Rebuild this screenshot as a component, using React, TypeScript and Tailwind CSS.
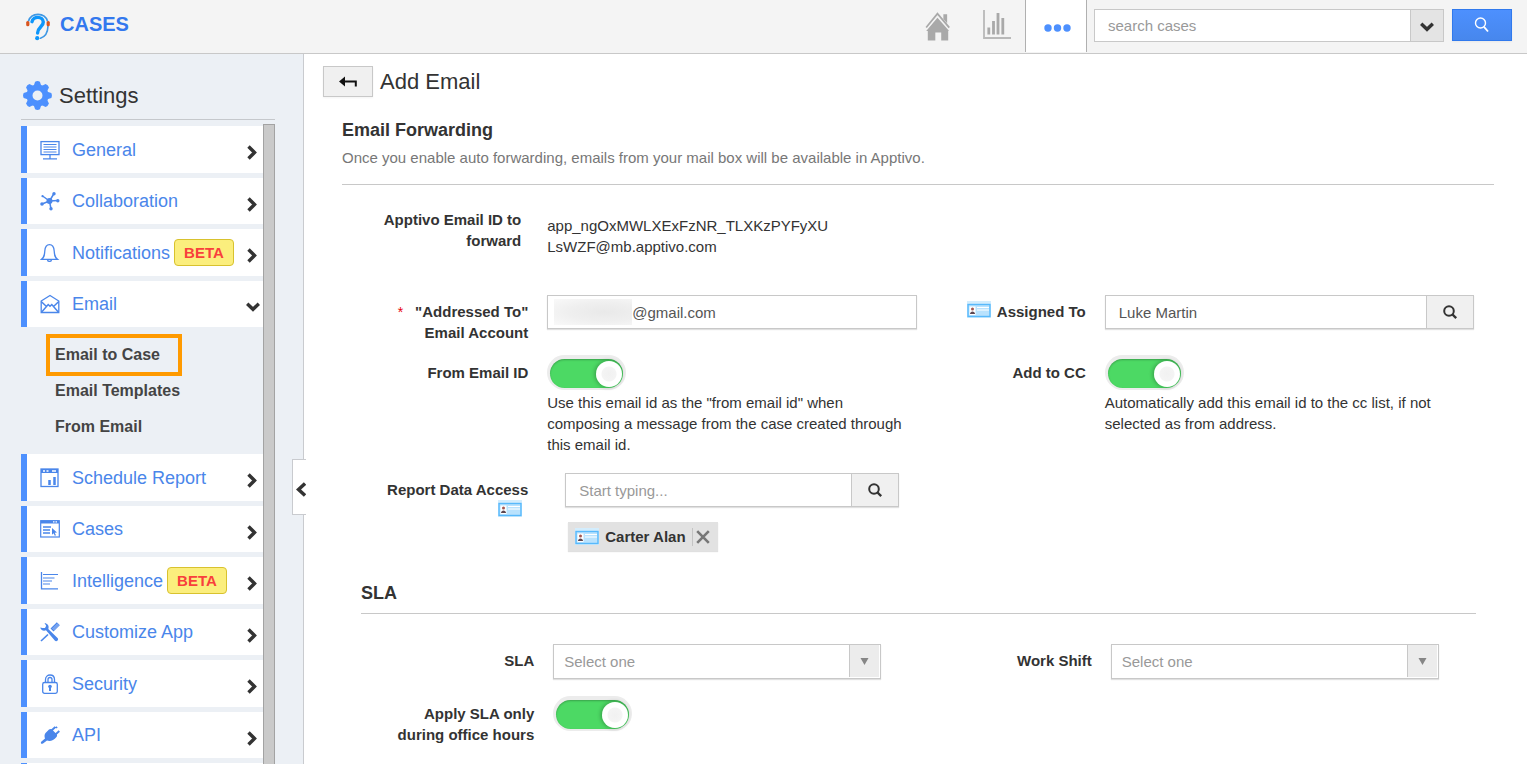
import { useState, type ReactNode } from "react";

/* ---------- icons ---------- */

const CasesLogo = () => (
  <svg width="24" height="29" viewBox="0 0 24 29" fill="none" aria-hidden="true">
    <path d="M2.300 9.500A10.200 10.200 0 0 1 21.700 9.500" stroke="#3d97e4" strokeWidth="1.700" />
    <path d="M22 14C21.800 20.500 19 24.800 14.500 26.200" stroke="#3d97e4" strokeWidth="1.600" strokeLinecap="round" />
    <path d="M6 9.700C7 4 17 3.800 17.300 10C17.500 14.500 11.700 15 11.600 21" stroke="#0d96fb" strokeWidth="3.400" strokeLinecap="round" />
    <circle cx="11.200" cy="26.200" r="2.100" fill="#0d96fb" />
    <rect x="0.200" y="9" width="3.200" height="5.200" rx="1.500" fill="#d9541e" />
    <rect x="20.600" y="9" width="3.200" height="5.200" rx="1.500" fill="#d9541e" />
  </svg>
);

const HomeIcon = () => (
  <svg width="26" height="29" viewBox="1 0.500 24 27" aria-hidden="true">
    <path d="M2 15 12.500 2 23.500 15" fill="none" stroke="#a9a9a9" strokeWidth="1.600" />
    <path d="M18 2.500h3.500v8.500L18 7z" fill="#a9a9a9" />
    <path d="M12.500 5.800 23 17.800V18.200h-0.500V27H16v-7.500h-5.500V27H3.500v-8.800H2z" fill="#a9a9a9" />
  </svg>
);

const ChartIcon = () => (
  <svg width="28" height="30" viewBox="0 0 28 30" aria-hidden="true">
    <path d="M1 0v28h27" fill="none" stroke="#b9b9b9" strokeWidth="1.800" />
    <path d="M5.800 17.500v7M10.500 11v13.500M15 3v21.500M19.800 8v16.500" stroke="#a9a9a9" strokeWidth="2.800" />
  </svg>
);

const DotsIcon = () => (
  <svg width="28" height="8" viewBox="0 0 28 8" fill="#4d90fe" aria-hidden="true">
    <circle cx="4" cy="4" r="3.700" />
    <circle cx="13.500" cy="4" r="3.700" />
    <circle cx="23" cy="4" r="3.700" />
  </svg>
);

const ThinSearchIcon = () => (
  <svg width="16" height="16" viewBox="0 0 16 16" fill="none" stroke="#fff" strokeWidth="1.400" aria-hidden="true">
    <circle cx="6.500" cy="6" r="5" />
    <path d="m10 9.800 4 4.700" strokeWidth="1.800" />
  </svg>
);

const BoldSearchIcon = () => (
  <svg width="16" height="16" viewBox="0 0 16 16" fill="none" stroke="#333" aria-hidden="true">
    <circle cx="7" cy="7" r="4.800" strokeWidth="2" />
    <path d="m10.500 10.500 3.700 3.700" strokeWidth="2.400" />
  </svg>
);

const ChevronRight = () => (
  <svg width="10" height="15" viewBox="0 0 10 15" fill="none" stroke="#333" strokeWidth="3.400" aria-hidden="true">
    <path d="m1.500 1.500 6 6-6 6" />
  </svg>
);

const ChevronDown = () => (
  <svg width="14" height="10" viewBox="0 0 14 10" fill="none" stroke="#333" strokeWidth="3.400" aria-hidden="true">
    <path d="m1.200 1.800 5.800 5.500 5.800-5.500" />
  </svg>
);

const ChevronLeft = () => (
  <svg width="10" height="15" viewBox="0 0 10 15" fill="none" stroke="#333" strokeWidth="3.400" aria-hidden="true">
    <path d="m9 1.500-6.500 6 6.500 6" />
  </svg>
);

const GearIcon = () => (
  <svg width="29" height="29" viewBox="-14.500 -14.500 29 29" aria-hidden="true">
    <g fill="#4d90fe">
      {[0, 45, 90, 135, 180, 225, 270, 315].map((angle) => (
        <path key={angle} d="M-4-9-2.400-13.800Q0-15 2.400-13.800L4-9z" transform={`rotate(${angle})`} />
      ))}
    </g>
    <circle r="8" fill="none" stroke="#4d90fe" strokeWidth="6" />
  </svg>
);

const BackArrow = () => (
  <svg width="18" height="12" viewBox="0 0 18 12" aria-hidden="true">
    <path d="M0 5.500 6 0.500v10z" fill="#111" />
    <path d="M5 5.500h11.800v5" fill="none" stroke="#111" strokeWidth="2" />
  </svg>
);

const ContactCard = () => (
  <svg width="24" height="17" viewBox="0 0 24 17" className="shrink-0" aria-hidden="true">
    <rect width="24" height="17" fill="#d3edfd" />
    <rect x="1" y="3.500" width="22" height="12" fill="#b9e2fd" stroke="#58b9fb" strokeWidth="1.400" />
    <rect x="2.500" y="5.500" width="6" height="8.500" fill="#fff" />
    <circle cx="5.500" cy="8" r="1.500" fill="#a5584f" />
    <path d="M3 13c0-3.500 5-3.500 5 0z" fill="#5c4650" />
    <path d="M10 6.500h12M10 9h12" stroke="#fff" strokeWidth="1.200" />
  </svg>
);

const MenuSvg = ({ children }: { children: ReactNode }) => (
  <svg width="20" height="20" viewBox="0 0 20 20" fill="none" stroke="#4a86ea" strokeWidth="1.300" className="shrink-0" aria-hidden="true">
    {children}
  </svg>
);

const GeneralIcon = () => (
  <MenuSvg>
    <rect x="1" y="1.600" width="18" height="13" />
    <path d="M3.500 4.500h13M3.500 7h13M3.500 9.500h13M3.500 12h13" strokeWidth="1.100" />
    <path d="M10 15v3.500M3 18.800h14" strokeWidth="1.300" />
  </MenuSvg>
);

const CollaborationIcon = () => (
  <MenuSvg>
    <path d="M9.500 10 14 2.500M9.500 10 18 9.500M9.500 10l1.500 8M9.500 10 2 13M9.500 10 2.500 5" strokeWidth="1.500" />
    <circle cx="9.500" cy="10" r="3" fill="#4a86ea" stroke="none" />
    <g fill="#4a86ea" stroke="none">
      <circle cx="14" cy="2.800" r="1.700" />
      <circle cx="17.800" cy="9.700" r="1.700" />
      <circle cx="11" cy="17.700" r="1.700" />
      <circle cx="2" cy="13" r="1.800" />
      <circle cx="2.500" cy="5.200" r="1.100" />
    </g>
  </MenuSvg>
);

const BellIcon = () => (
  <MenuSvg>
    <path d="M1.500 16.300C4.500 14 4.500 12 4.800 8c.3-4.500 2.200-6.300 4.700-6.300s4.400 1.800 4.700 6.300c.3 4 .3 6 3.300 8.300z" />
    <path d="M7.500 16.800c.4 2.200 3.600 2.200 4 0" />
  </MenuSvg>
);

const EnvelopeIcon = () => (
  <MenuSvg>
    <path d="M1.200 7 10 1.500 18.800 7v11.500H1.200z" />
    <path d="m1.200 7.500 5.800 5.500M18.800 7.500 13 13M1.500 18.300l6.700-7.800 1.800 1.800 1.800-1.800 6.700 7.800" strokeWidth="1.500" />
  </MenuSvg>
);

const ScheduleIcon = () => (
  <MenuSvg>
    <rect x="1" y="1" width="17" height="17.500" />
    <path d="M1 3h17" strokeWidth="4" />
    <path d="M3 3h2M6.500 3h2M12 3h4" stroke="#fff" strokeWidth="1.300" />
    <path d="M9.500 12v5M14.500 9v8" strokeWidth="2.500" />
  </MenuSvg>
);

const CasesIcon = () => (
  <MenuSvg>
    <rect x="0.700" y="1.700" width="18.600" height="16.300" strokeWidth="1.200" />
    <path d="M1 3h18" strokeWidth="3" />
    <path d="M13 2.800h1.500M15.500 2.800H17" stroke="#fff" />
    <path d="M3 8h8M3 11h7M3 14h7" strokeWidth="1.500" />
    <path d="m12 9 5 4.500-2.300.2 1.300 2.500-1.200.6-1.200-2.600-1.600 1.500z" fill="#4a86ea" stroke="none" />
  </MenuSvg>
);

const IntelligenceIcon = () => (
  <MenuSvg>
    <path d="M1.500 1v16.800H18" strokeWidth="1.300" />
    <path d="M3 3.500h15M3 7h11.500M3 10h9M3 13h7" strokeWidth="1.200" />
  </MenuSvg>
);

const ToolsIcon = () => (
  <MenuSvg>
    <path d="M0.300 5.500C.5 8 3.500 9.500 6 8.300l9 10.500c1.500 1.200 4-.8 2.800-2.600L8.300 7C9.500 4 7.500 1.300 4.500 1L6.200 3.800 5 6 2.500 6z" fill="#4a86ea" stroke="none" />
    <path d="M1 19 8 12.500" strokeWidth="1.700" />
    <path d="m12 8 6.300-6.300" strokeWidth="4.200" />
    <path d="m12.500 7 5.500-5.500M13.500 8 19 2.500" stroke="#c5d9fb" strokeWidth="0.700" />
  </MenuSvg>
);

const LockIcon = () => (
  <MenuSvg>
    <rect x="2.700" y="8.500" width="14.600" height="10.800" rx="1.800" />
    <path d="M5.500 8.500V5.500c0-6 9-6 9 0v3M8 8.500v-3c0-2.700 4-2.700 4 0v3" />
    <circle cx="10" cy="12.500" r="1.800" fill="#4a86ea" stroke="none" />
    <path d="M10 13v4" strokeWidth="2" />
  </MenuSvg>
);

const PlugIcon = () => (
  <MenuSvg>
    <path d="M5.500 8 9 4.500c1-.8 2-.8 3 0L16.500 9c.8 1 .8 2 0 3-3 4-7 4.500-9.500 3.500L3 18.500c-1.500 1-2.800-.3-1.800-1.800L5 13.500C4.300 11.500 4.300 9.500 5.500 8z" fill="#4a86ea" stroke="none" />
    <path d="m11.500 5.500 3.800-3.500M15.500 9.500 19.300 6M17 1.800l-1 1" strokeWidth="1.900" />
  </MenuSvg>
);

/* ---------- sidebar ---------- */

type MenuEntry = { label: string; icon: ReactNode; beta?: boolean; children?: string[] };

const menu: MenuEntry[] = [
  { label: "General", icon: <GeneralIcon /> },
  { label: "Collaboration", icon: <CollaborationIcon /> },
  { label: "Notifications", icon: <BellIcon />, beta: true },
  { label: "Email", icon: <EnvelopeIcon />, children: ["Email to Case", "Email Templates", "From Email"] },
  { label: "Schedule Report", icon: <ScheduleIcon /> },
  { label: "Cases", icon: <CasesIcon /> },
  { label: "Intelligence", icon: <IntelligenceIcon />, beta: true },
  { label: "Customize App", icon: <ToolsIcon /> },
  { label: "Security", icon: <LockIcon /> },
  { label: "API", icon: <PlugIcon /> },
];

function Sidebar() {
  return (
    <aside className="relative flex w-[304px] shrink-0 flex-col border-r border-[#c9cbcf] bg-[#ecf0f5] pl-[21px] pr-7">
      <h2 className="flex h-[66px] shrink-0 items-center gap-[7px] border-b border-[#c5c8cc] pt-[18px] pl-0.5 text-[22px] text-[#333]">
        <GearIcon />
        Settings
      </h2>
      <div className="flex min-h-0 flex-1 pt-1">
        <nav className="min-w-0 flex-1 overflow-hidden pt-0.5" aria-label="Settings">
          <ul className="flex flex-col gap-[5px]">
            {menu.map((entry, i) => (
              <li key={entry.label}>
                <a
                  href="#"
                  className={`flex items-center border-l-6 border-[#4d90fe] bg-white pr-1.5 pl-[13px] text-lg text-[#4a86ea] ${
                    i % 2 === 0 ? "h-[47px]" : "h-[46px]"
                  }`}
                >
                  {entry.icon}
                  <span className="ml-3 flex items-center gap-1">
                    {entry.label}
                    {entry.beta && (
                      <span className="flex h-[27px] items-center rounded-sm border border-[#d8c22e] bg-[#fbee7d] px-[9px] text-[15px] font-bold text-[#f8403c]">
                        BETA
                      </span>
                    )}
                  </span>
                  <span className={`ml-auto pt-1.5 ${entry.children ? "-mr-[3px]" : ""}`}>
                    {entry.children ? <ChevronDown /> : <ChevronRight />}
                  </span>
                </a>
                {entry.children && (
                  <ul className="pt-2.5 pb-1 pl-7 text-base font-bold text-[#444]">
                    {entry.children.map((child, n) => (
                      <li key={child}>
                        <a
                          href="#"
                          className={`flex h-9 w-[130px] items-center pl-1.5 whitespace-nowrap ${
                            n === 0 ? "outline-4 -outline-offset-1 outline-[#ff9a00]" : ""
                          }`}
                        >
                          {child}
                        </a>
                      </li>
                    ))}
                  </ul>
                )}
              </li>
            ))}
            <li className="h-[47px] border-l-6 border-[#4d90fe] bg-white" />
          </ul>
        </nav>
        <div className="w-3 shrink-0 border border-b-0 border-[#a3a3a3] bg-[#cacaca]" />
      </div>
      <button
        type="button"
        aria-label="Collapse settings"
        className="absolute top-[405px] -right-[3px] flex h-14 w-[14px] items-center justify-end border border-r-0 border-[#c9cbcf] bg-white pt-1"
      >
        <ChevronLeft />
      </button>
    </aside>
  );
}

/* ---------- form pieces ---------- */

function Toggle({ id }: { id: string }) {
  const [on, setOn] = useState(true);
  return (
    <input
      id={id}
      type="checkbox"
      role="switch"
      checked={on}
      onChange={() => setOn(!on)}
      className="mt-[3px] ml-[3px] flex h-[29px] w-[73px] appearance-none items-center rounded-full bg-gray-300 px-px shadow-[0px_-1px_0px_3px_#ececec,inset_0_1px_2px_rgba(0,0,0,0.25)] before:block before:size-[26px] before:rounded-full before:bg-[radial-gradient(circle,#f1f1f1_0,#f4f4f4_7px,#ffffff_8px)] before:shadow-[-1px_0_4px_rgba(0,0,0,0.3)] before:content-[''] checked:justify-end checked:bg-[#4cd964]"
    />
  );
}

function Field({ id, label, children }: { id: string; label: ReactNode; children: ReactNode }) {
  return (
    <div className="grid grid-cols-[30%_minmax(0,1fr)] gap-x-[19px]">
      <label htmlFor={id} className="justify-self-end pt-1.5 text-right font-bold text-[#333]">
        {label}
      </label>
      <div className="pr-0.5">{children}</div>
    </div>
  );
}

function Lookup({ id, value, placeholder }: { id: string; value?: string; placeholder?: string }) {
  return (
    <div className="flex h-[34px] border border-[#c8c8c8] shadow-[0_1px_1px_rgba(0,0,0,0.12)]">
      <input
        id={id}
        type="text"
        defaultValue={value}
        placeholder={placeholder}
        className="min-w-0 flex-1 bg-white px-[13px] text-[#555] outline-none placeholder:text-[#999]"
      />
      <button
        type="button"
        aria-label="Search people"
        className="flex w-[47px] items-center justify-center border-l border-[#c8c8c8] bg-[#f0f0f0]"
      >
        <BoldSearchIcon />
      </button>
    </div>
  );
}

function Select({ id }: { id: string }) {
  return (
    <div className="relative h-[35px] w-[328px] max-w-full border border-[#c8c8c8] shadow-[0_1px_1px_rgba(0,0,0,0.12)]">
      <select id={id} className="size-full appearance-none bg-white pr-9 pl-2.5 text-[#999] outline-none">
        <option>Select one</option>
      </select>
      <span className="pointer-events-none absolute top-0 right-px bottom-px flex w-[30px] items-center justify-center border-l border-[#c8c8c8] bg-[#ececec]">
        <svg width="9" height="7" viewBox="0 0 9 7" fill="#868686" aria-hidden="true">
          <path d="M0.500 0h8l-4 7z" />
        </svg>
      </span>
    </div>
  );
}

/* ---------- page ---------- */

export default function App() {
  return (
    <div className="flex h-screen flex-col overflow-hidden bg-white font-['Liberation_Sans',Arial,sans-serif] text-[15px] leading-[21px] text-[#333]">
      <header className="flex h-[54px] shrink-0 items-start border-b border-[#c8c8c8] bg-[#f4f4f4] pr-[15px] pl-[26px]">
        <a href="#" className="flex items-start gap-2.5 pt-3 text-xl leading-6 font-bold text-[#3378ee]">
          <CasesLogo />
          CASES
        </a>
        <div className="ml-auto flex h-full items-start">
          <a href="#" aria-label="Home" className="pt-3 pr-8">
            <HomeIcon />
          </a>
          <a href="#" aria-label="Reports" className="pt-2.5 pr-3.5">
            <ChartIcon />
          </a>
          <button
            type="button"
            aria-label="More"
            className="flex h-[52px] w-[62px] items-center justify-center border-x border-[#b0b0b0] bg-white pt-1 pl-1"
          >
            <DotsIcon />
          </button>
        </div>
        <form className="flex pt-[9px] pl-[7px]" onSubmit={(e) => e.preventDefault()}>
          <input
            type="text"
            aria-label="Search cases"
            placeholder="search cases"
            className="h-[33px] w-[316px] border border-r-0 border-[#c8c8c8] bg-white px-[13px] outline-none placeholder:text-[#999]"
          />
          <button
            type="button"
            aria-label="Search options"
            className="flex h-[33px] w-[34px] items-center justify-center border border-[#c8c8c8] bg-[#e4e4e4] pt-0.5"
          >
            <ChevronDown />
          </button>
          <button
            type="submit"
            aria-label="Search"
            className="ml-2 flex h-8 w-[60px] items-center justify-center border border-[#3079ed] bg-linear-to-b from-[#4d90fe] to-[#4787ed] shadow-xs"
          >
            <ThinSearchIcon />
          </button>
        </form>
      </header>

      <div className="flex min-h-0 flex-1">
        <Sidebar />
        <main className="min-w-0 flex-1 overflow-hidden pt-3 pr-[33px] pl-[38px]">
          <div className="-ml-[19px] flex h-8 items-start gap-[7px]">
            <button
              type="button"
              aria-label="Back"
              className="flex h-[31px] w-[50px] items-center justify-center border border-[#c8c8c8] bg-[#f0f0f0] shadow-xs"
            >
              <BackArrow />
            </button>
            <h1 className="pt-0.5 text-[22px] leading-7">Add Email</h1>
          </div>

          <section className="border-b border-[#c8c8c8] pt-5 pb-4">
            <h2 className="text-lg leading-6 font-bold">Email Forwarding</h2>
            <p className="pt-[5px] text-[#777]">Once you enable auto forwarding, emails from your mail box will be available in Apptivo.</p>
          </section>

          <div className="pr-[18px] pl-[19px]">
            <div className="grid grid-cols-2 pt-[18px]">
              <div className="grid grid-cols-[30%_minmax(0,1fr)] gap-x-[19px]">
                <div className="pt-1.5 pr-[7px] text-right font-bold">
                  Apptivo Email ID to forward
                </div>
                <div className="w-[290px] max-w-full pt-3">
                  app_ngOxMWLXExFzNR_TLXKzPYFyXU<wbr />LsWZF@mb.apptivo.com
                </div>
              </div>
            </div>

            <div className="grid grid-cols-2 pt-[38px]">
              <Field
                id="addressed-to"
                label={
                  <>
                    <span className="mr-3 text-sm font-normal text-red-600">*</span>
                    "Addressed To"
                    <br />
                    Email Account
                  </>
                }
              >
                <div className="flex h-[34px] items-center border border-[#c8c8c8] pl-1.5 shadow-[0_1px_1px_rgba(0,0,0,0.12)]">
                  <span className="h-[26px] w-[78px] shrink-0 bg-[radial-gradient(ellipse_at_65%_50%,#e9e9e9_0,#efefef_50%,#f9f9f9_100%)]" />
                  <input
                    id="addressed-to"
                    type="text"
                    defaultValue="@gmail.com"
                    className="h-full min-w-0 flex-1 bg-transparent text-[#555] outline-none"
                  />
                </div>
              </Field>
              <Field
                id="assigned-to"
                label={
                  <span className="flex gap-1.5">
                    <ContactCard />
                    Assigned To
                  </span>
                }
              >
                <Lookup id="assigned-to" value="Luke Martin" />
              </Field>
            </div>

            <div className="grid grid-cols-2 pt-[13px]">
              <Field id="from-email" label="From Email ID">
                <Toggle id="from-email" />
                <p className="pt-1">
                  Use this email id as the "from email id" when composing a message from the case created through this email id.
                </p>
              </Field>
              <Field id="add-cc" label="Add to CC">
                <Toggle id="add-cc" />
                <p className="pt-1">Automatically add this email id to the cc list, if not selected as from address.</p>
              </Field>
            </div>

            <div className="grid grid-cols-2 pt-[18px]">
              <Field
                id="data-access"
                label={
                  <span className="flex flex-col items-end">
                    Report Data Access
                    <span className="mr-1.5">
                      <ContactCard />
                    </span>
                  </span>
                }
              >
                <div className="px-[18px]">
                  <Lookup id="data-access" placeholder="Start typing..." />
                  <div className="mt-[15px] ml-[3px] flex h-[29px] w-fit items-center bg-[#e2e2e2] pr-2 pl-[7px] font-bold shadow-[0_1px_1px_rgba(0,0,0,0.12)]">
                    <ContactCard />
                    <span className="px-1.5">Carter Alan</span>
                    <button type="button" aria-label="Remove Carter Alan" className="border-l border-[#c4c4c4] py-0.5 pl-[3px]">
                      <svg width="14" height="14" viewBox="0 0 14 14" stroke="#777" strokeWidth="2.600" aria-hidden="true">
                        <path d="m1.200 1.200 11.600 11.600M12.800 1.200 1.200 12.800" />
                      </svg>
                    </button>
                  </div>
                </div>
              </Field>
            </div>

            <h2 className="border-b border-[#c8c8c8] pt-[30px] pb-2 text-lg leading-6 font-bold">SLA</h2>

            <div className="-mr-1.5 ml-1.5">
              <div className="grid grid-cols-2 pt-[30px]">
                <Field id="sla" label="SLA">
                  <Select id="sla" />
                </Field>
                <Field id="work-shift" label="Work Shift">
                  <Select id="work-shift" />
                </Field>
              </div>
              <div className="grid grid-cols-2 pt-[18px]">
                <Field
                  id="office-hours"
                  label={
                    <>
                      Apply SLA only
                      <br />
                      during office hours
                    </>
                  }
                >
                  <Toggle id="office-hours" />
                </Field>
              </div>
            </div>
          </div>
        </main>
      </div>
    </div>
  );
}
